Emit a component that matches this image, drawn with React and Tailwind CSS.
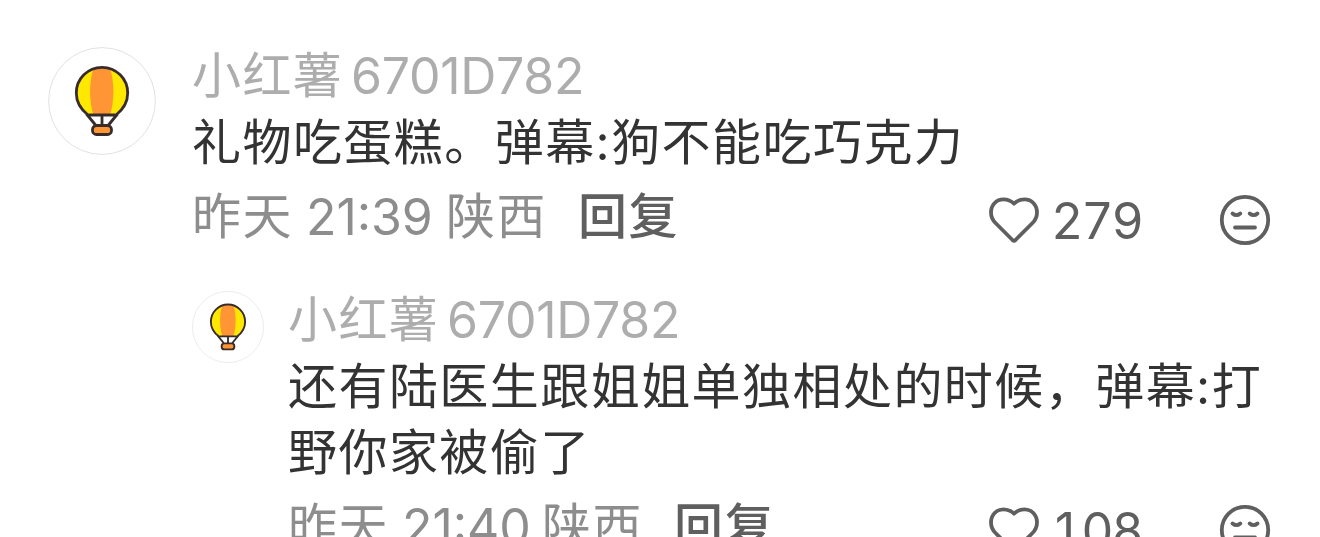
import clsx from "clsx";
import React from "react";

const comments = [
  {
    id: 1,
    name: "小红薯",
    code: "6701D782",
    lines: ["礼物吃蛋糕。弹幕:狗不能吃巧克力"],
    day: "昨天",
    time: "21:39",
    place: "陕西",
    likes: 279,
  },
  {
    id: 2,
    name: "小红薯",
    code: "6701D782",
    lines: ["还有陆医生跟姐姐单独相处的时候，弹幕:打", "野你家被偷了"],
    day: "昨天",
    time: "21:40",
    place: "陕西",
    likes: 108,
    isReply: true,
  },
];

function BalloonAvatar({ className }) {
  return (
    <svg viewBox="0 0 108 108" className={clsx("block shrink-0", className)}>
      <circle cx="54" cy="54" r="53.4" fill="#fff" stroke="#e2e2e2" strokeWidth="1" />
      <path
        d="M43 68C34 63 28.300 55.500 28.300 46a25.700 25.700 0 0 1 51.400 0c0 9.500-5.700 17-14.700 22Z"
        fill="#ffe800"
      />
      <path
        d="M45.500 68C41 55 41 34 45.500 21.500Q54 18.500 62 21.500C66.500 34 66.500 55 62 68Z"
        fill="#ff9535"
      />
      <path
        d="M40 68C33 62.500 28.300 55.500 28.300 46a25.700 25.700 0 0 1 51.400 0c0 9.500-4.700 16.500-11.700 22ZM38.500 67 47.500 78M69.500 67 60.500 78M54 68V78"
        fill="none"
        stroke="#372c2b"
        strokeWidth="2.800"
        strokeLinejoin="round"
      />
      <rect x="44.500" y="78.500" width="19" height="9" rx="4" fill="#ff9535" stroke="#372c2b" strokeWidth="2.800" />
    </svg>
  );
}

function HeartIcon() {
  return (
    <svg viewBox="0 0 52 52" className="block size-[52px] shrink-0" fill="none">
      <path
        d="M26 9.700C22.500 6.300 19 5.400 15.500 5.400C8 5.400 3 11.200 3 18.500C3 23 4.500 26 7.500 29L24.500 46Q26 47.400 27.500 46L44.500 29C47.500 26 49 23 49 18.500C49 11.200 44 5.400 36.500 5.400C33 5.400 29.500 6.300 26 9.700Z"
        stroke="#5f5f5f"
        strokeWidth="3.800"
        strokeLinejoin="round"
      />
    </svg>
  );
}

function DislikeIcon() {
  return (
    <svg viewBox="0 0 52 52" className="block size-[52px] shrink-0" fill="none">
      <g stroke="#5f5f5f" strokeWidth="3.800" strokeLinecap="round">
        <circle cx="26" cy="26" r="23.200" />
        <path d="M13.500 19.500Q17.400 22.800 21.300 19.500M30.700 19.500Q34.600 22.800 38.500 19.500M16 33.500H36" />
      </g>
    </svg>
  );
}

function Comment({ comment }) {
  const { name, code, lines, day, time, place, likes, isReply } = comment;

  return (
    <article className={clsx("flex", isReply ? "h-[310px] pl-36" : "h-[244px]")}>
      <BalloonAvatar
        className={isReply ? "mt-1 mr-6 size-[72px]" : "mt-1 mr-9 size-[108px]"}
      />
      <div className="min-w-0 flex-1 whitespace-nowrap">
        <div className="flex h-[66px] items-center text-[#adadad]">
          <span className="w-[159px] text-[49px] tracking-[1.4px]">{name}</span>
          <span className="text-[50px] tracking-[-0.3px]">{code}</span>
        </div>
        <div className="pt-px">
          {lines.map((line) => (
            <p key={line} className="h-[66px] tracking-[1.45px] text-[#333333]">
              {line}
            </p>
          ))}
        </div>
        <div className="mt-2 flex h-[66px] items-center text-[#8d8d8d]">
          <span className="w-[114px] tracking-[1.4px]">{day}</span>
          <span className="w-[140px] text-[50px] tracking-[-0.1px] [font-feature-settings:'case']">
            {time}
          </span>
          <span className="w-[132px] tracking-[1.4px]">{place}</span>
          <button className="font-medium tracking-[1.4px] text-[#5f5f5f]">回复</button>
          <div className="mt-1.5 ml-auto flex items-center text-[50px] text-[#5f5f5f]">
            <HeartIcon />
            <span className="mt-0.5 ml-[11px] w-[168px] tracking-[-2.2px] tabular-nums">{likes}</span>
            <DislikeIcon />
          </div>
        </div>
      </div>
    </article>
  );
}

function App() {
  return (
    <main className="h-[537px] w-[1320px] overflow-hidden bg-white pt-[43px] pr-[49px] pl-12 font-['Inter','Noto_Sans_CJK_SC',sans-serif] text-[49px] leading-[66px]">
      {comments.map((comment) => (
        <Comment key={comment.id} comment={comment} />
      ))}
    </main>
  );
}

export default App;
